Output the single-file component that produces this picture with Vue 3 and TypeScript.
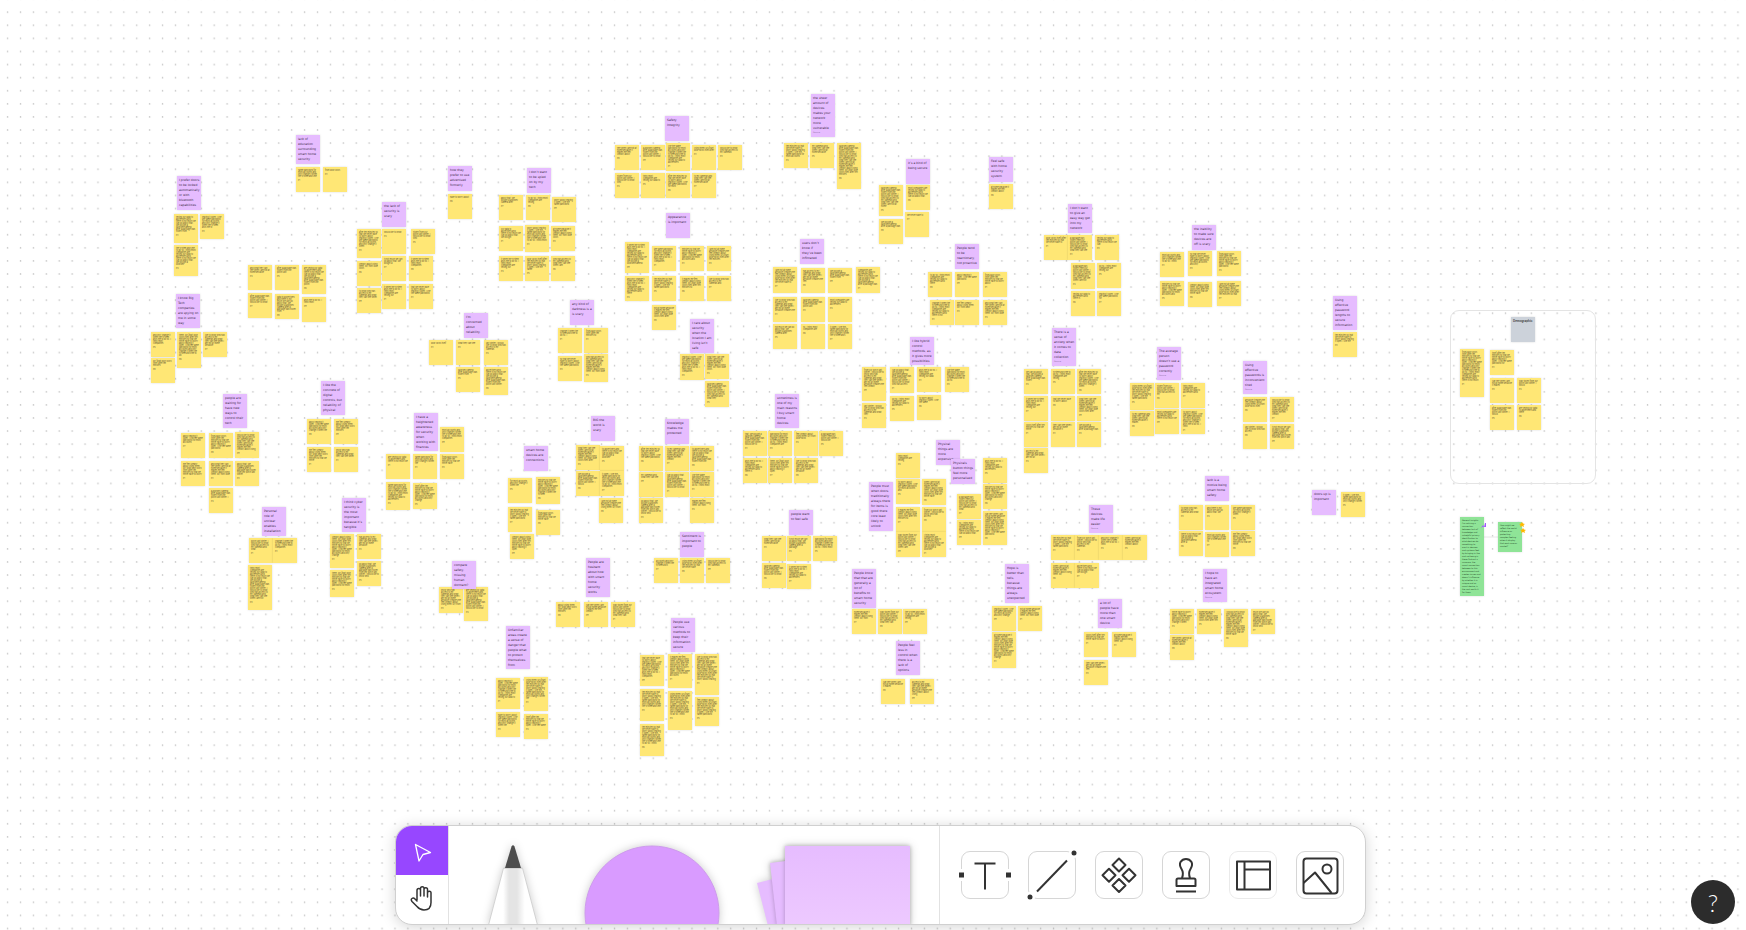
<script setup lang="ts">
type Note = [x: number, y: number, lines: number, height?: number]

interface Cluster {
  title?: string
  at?: [x: number, y: number, height?: number]
  by?: string
  notes: Note[]
}

const clusters: Cluster[] = [
  { title: 'lack of\neducation\nsurrounding\nsmart home\nsecurity', at: [296, 135, 29], notes: [[296, 167, 5], [323, 167, 1]] },
  { title: 'I prefer doors\nto be locked\nautomatically\nor with\nbluetooth\ncapabilities', at: [177, 176, 34], notes: [[174, 214, 9, 29], [200, 214, 7], [174, 245, 10, 31]] },
  { title: 'the lack of\nsecurity is\nscary', at: [382, 202], notes: [[357, 229, 9, 29], [382, 229, 1], [411, 229, 4], [357, 261, 3], [382, 256, 3], [409, 256, 4], [357, 288, 4], [382, 284, 5], [409, 284, 5]] },
  { notes: [[248, 265, 3], [275, 265, 3], [302, 265, 10, 29], [248, 293, 5], [275, 294, 8], [302, 297, 2]] },
  { title: 'I know Big\nTech\ncompanies\nare spying on\nme in some\nway', at: [176, 294, 34], notes: [[151, 332, 5], [177, 332, 13, 36], [203, 332, 6], [151, 358, 3]] },
  { title: 'how they\nprefer to use\nadvertised\nformerly', at: [448, 166], notes: [[448, 194, 1]] },
  { title: 'I don’t want\nto be spied\non by my\ntech', at: [527, 168], notes: [[499, 195, 3], [526, 195, 3], [552, 197, 3], [499, 226, 5], [525, 225, 9, 27], [551, 226, 5], [499, 256, 5], [525, 256, 7], [551, 256, 4]] },
  { title: 'Safety\nIntegrity', at: [665, 116], notes: [[615, 145, 4], [641, 145, 6], [666, 143, 10, 28], [692, 145, 3], [718, 145, 3], [615, 173, 4], [641, 173, 3], [666, 173, 7], [692, 173, 4]] },
  { title: 'Appearance\nis important', at: [666, 213], notes: [[625, 242, 11, 31], [652, 246, 7], [680, 246, 7], [707, 246, 7], [625, 276, 8], [652, 276, 6], [680, 276, 6], [707, 276, 3], [652, 305, 6]] },
  { title: 'any kind of\ndarkness is a\nis scary', at: [570, 300], notes: [[558, 328, 3], [584, 328, 3], [558, 356, 5], [584, 354, 9, 28]] },
  { title: 'I’m\nconcerned\nabout\nreliability.', at: [464, 313], notes: [[429, 340, 1], [456, 340, 1], [484, 340, 4], [456, 367, 3], [484, 367, 9, 28]] },
  { title: 'I care about\nsecurity\nwhen the\nlocation I am\nliving isn’t\nsafe', at: [690, 319, 34], notes: [[680, 354, 9, 26], [705, 354, 7], [705, 381, 9, 26]] },
  { title: 'the sheer\namount of\ndevices\nmakes your\nnetwork\nmore\nvulnerable', by: 'Source', at: [811, 94, 43], notes: [[784, 143, 7], [810, 143, 4], [837, 143, 17, 46]] },
  { title: 'it’s a kind of\nbeing secure', at: [906, 159], notes: [[879, 185, 11, 31], [906, 185, 6], [905, 212, 1], [879, 219, 3]] },
  { title: 'Feel safe\nwith home\nsecurity\nsystem', at: [989, 157], notes: [[989, 184, 3]] },
  { title: 'users don’t\nknow if\nthey’ve been\ninfiltrated', at: [800, 239], notes: [[773, 267, 9, 26], [801, 268, 6], [828, 268, 4], [856, 267, 9, 26], [773, 297, 7], [801, 297, 4], [828, 297, 3], [773, 324, 4], [801, 324, 2], [828, 324, 6]] },
  { title: 'People tend\nto be\nreactionary,\nnot proactive', at: [955, 244], notes: [[928, 272, 5], [955, 272, 3], [983, 272, 5], [930, 300, 8], [955, 300, 3], [983, 300, 7]] },
  { title: 'I like hybrid\ncontrol\nmethods, as\nit gives more\npossibilities', at: [910, 337, 28], notes: [[862, 367, 10, 34], [890, 367, 9, 26], [917, 367, 4], [945, 367, 6], [862, 403, 5], [890, 396, 4], [917, 395, 3]] },
  { title: 'I don’t want\nto give an\neasy way get\ninto my\nnetwork', at: [1068, 204, 29], notes: [[1044, 235, 4], [1068, 235, 8], [1095, 235, 4], [1071, 263, 9, 26], [1097, 263, 3], [1071, 291, 3], [1097, 291, 3]] },
  { title: 'the inability\nto make sure\ndevices are\noff is scary', at: [1192, 225], notes: [[1160, 252, 5], [1188, 251, 7], [1217, 251, 8], [1160, 281, 7], [1188, 282, 6], [1217, 281, 8]] },
  { title: 'Using\neffective\npassword\nlengths to\nsecure\ninformation', at: [1333, 296, 34], notes: [[1333, 332, 5]] },
  { title: 'There is a\nsense of\nanxiety when\nit comes to\ndata\ncollection', by: 'Source', at: [1052, 328, 38], notes: [[1024, 369, 5], [1051, 369, 4], [1077, 369, 9], [1024, 396, 5], [1051, 396, 2], [1077, 396, 8], [1024, 422, 3], [1051, 422, 3], [1077, 422, 3], [1024, 448, 4]] },
  { title: 'The average\nperson\ndoesn’t use a\npassword\ncorrectly', by: 'Source', at: [1157, 347, 33], notes: [[1130, 383, 9, 27], [1155, 383, 5], [1181, 383, 4], [1130, 411, 5], [1155, 409, 5], [1181, 409, 9]] },
  { title: 'Using\neffective\npasswords is\ninconvenient\ntired', by: 'Source', at: [1243, 361, 33], notes: [[1243, 397, 5], [1270, 397, 8], [1243, 424, 3], [1270, 424, 7]] },
  { title: 'people are\nwaiting for\nhave new\nways to\ncontrol their\ntech', at: [223, 394, 34], notes: [[181, 433, 4], [209, 433, 8], [235, 432, 9, 26], [181, 461, 7], [209, 461, 7], [235, 461, 6], [209, 488, 5]] },
  { title: 'I like the\nconcrete of\ndigital\ncontrols, but\nreliability of\nphysical', at: [321, 381, 34], notes: [[307, 419, 6], [334, 419, 5], [307, 447, 6], [334, 447, 4]] },
  { title: 'I have a\nheightened\nawareness\nfor security\nwhen\nworking with\nfinances', at: [414, 413, 38], notes: [[440, 427, 6], [386, 454, 4], [413, 454, 4], [440, 454, 4], [386, 482, 9, 28], [413, 483, 9, 26]] },
  { title: 'Personal\nrole of\nunclear\nenables\ninstallation', at: [262, 507, 29], notes: [[249, 538, 5], [273, 538, 4], [248, 565, 18, 45]] },
  { title: 'I think cyber\nsecurity is\nthe most\nimportant\nbecause it’s\ntangible', at: [342, 498, 34], notes: [[330, 534, 12, 34], [357, 534, 5], [330, 570, 9, 27], [357, 561, 8]] },
  { title: 'compare\nsafety,\nmissing\nhuman\ndormant?', at: [452, 561, 28], notes: [[439, 587, 9, 26], [464, 587, 12, 34]] },
  { title: 'BIG the\nworld is\nscary', at: [591, 416], notes: [[576, 445, 8], [600, 446, 5], [576, 471, 6], [600, 471, 8], [599, 498, 5]] },
  { title: 'smart home\ndevices are\nconnections', at: [524, 446], notes: [[508, 478, 3], [536, 477, 9, 27], [508, 507, 6], [536, 510, 4], [510, 534, 8]] },
  { title: 'Knowledge\nmakes me\nprotected', at: [665, 419], notes: [[639, 446, 6], [665, 446, 6], [690, 446, 8], [639, 472, 2], [665, 472, 8], [690, 472, 7], [639, 498, 8], [690, 498, 3]] },
  { title: 'Sentiment is\nimportant to\npeople', at: [680, 532], notes: [[654, 558, 3], [680, 558, 5], [706, 558, 3]] },
  { title: 'People are\nhesitant\nabout how\nwith smart\nhome\nsecurity\nworks', at: [586, 558, 39], notes: [[556, 602, 4], [584, 602, 4], [611, 602, 7]] },
  { title: 'People use\nvarious\nmethods to\nkeep their\ninformation\nsecure', at: [671, 618, 34], notes: [[640, 655, 11, 31], [668, 654, 12, 34], [695, 654, 15, 41], [640, 689, 10, 32], [668, 691, 14, 39], [695, 697, 10, 29], [640, 724, 11, 32]] },
  { title: 'Unfamiliar\nareas create\na sense of\ndanger that\npeople what\nto protect\nthemselves\nfrom', at: [506, 626, 43], notes: [[496, 678, 11, 31], [524, 677, 12, 34], [496, 712, 7], [524, 714, 6]] },
  { title: 'sometimes is\none of my\nmain reasons\nI buy smart\nhome\ndevices', at: [775, 394, 34], notes: [[743, 431, 7], [768, 431, 7], [794, 431, 3], [819, 431, 4], [743, 458, 6], [768, 458, 7], [794, 458, 6]] },
  { title: 'people want\nto feel safe', at: [789, 510], notes: [[762, 536, 3], [787, 536, 5], [813, 536, 6], [762, 563, 6], [787, 564, 6]] },
  { title: 'Physical\nthings are\nmore\nexpensive', at: [936, 440], notes: [[896, 453, 2], [896, 479, 5], [922, 479, 9, 26], [896, 507, 6], [922, 507, 4], [896, 532, 8], [922, 532, 8]] },
  { title: 'Physicals\nbutton things\nfeel more\npersonalised', at: [951, 459], notes: [[983, 458, 5], [983, 484, 8], [957, 494, 7], [983, 511, 13, 34], [957, 520, 7]] },
  { title: 'People trust\nwhen doors\ntraditionally\nalways there\nfor items is\ngood there\ncore least\nlikely to\nunlock', at: [869, 482, 49], notes: [] },
  { title: 'People know\nthat that are\ngenerally a\nlot of\nbenefits to\nsmart home\nsecurity', at: [852, 569, 39], notes: [[852, 609, 4], [878, 609, 7], [903, 609, 4]] },
  { title: 'People feel\nless in\ncontrol when\nthere is a\nlack of\noptions', at: [896, 641, 34], notes: [[881, 679, 3], [910, 679, 7]] },
  { title: 'Hope is\nbetter than\ntells,\nbecause\nthings are\nalways\nunexpected', at: [1005, 564, 39], notes: [[992, 606, 5], [1018, 606, 5], [992, 632, 14, 36]] },
  { title: 'a lot of\npeople have\nmore than\none smart\ndevice', at: [1098, 599, 29], notes: [[1084, 632, 4], [1112, 632, 4], [1084, 660, 4]] },
  { title: 'These\ndevices\nmake life\neasier', by: 'Source', at: [1089, 505, 28], notes: [[1051, 535, 6], [1075, 535, 5], [1099, 535, 4], [1123, 535, 4], [1051, 563, 5], [1075, 563, 4]] },
  { title: 'lack is a\nmotive being\nsmart home\nsafety', at: [1205, 476], notes: [[1179, 505, 3], [1205, 505, 3], [1231, 505, 4], [1179, 531, 5], [1205, 532, 4], [1231, 531, 6]] },
  { title: 'I hope to\nhave an\nintegrated\nsmart home\necosystem', by: 'Source', at: [1203, 569, 33], notes: [[1170, 609, 7], [1197, 609, 6], [1224, 609, 14, 38], [1251, 609, 9], [1170, 635, 4]] },
  { title: 'doors up is\nimportant', at: [1312, 490], notes: [[1341, 492, 5]] },
]

const sectionNotes: Note[] = [
  [1460, 349, 18, 48],
  [1490, 350, 7],
  [1490, 378, 3],
  [1517, 378, 3],
  [1490, 405, 4],
  [1517, 405, 3],
]

const words =
  'I would like to know who has access to my cameras and what they can see when I am not at home because it makes me feel uneasy about using them. My front door locks itself after ten minutes so that we never have to worry about leaving it open. I use the same password for most accounts and only change it when the system asks me to do so. I think most companies are selling our data to advertisers and there is not much we can do about that. We bought a doorbell camera after a package was stolen from our porch last winter.'.split(' ')

function quote(note: Note): string {
  const limit = note[2] * 15
  let index = (note[0] * 7 + note[1] * 3) % words.length
  let text = ''
  while (text.length < limit) {
    text += words[index] + ' '
    index = (index + 1) % words.length
  }
  return text.trim()
}

function place(x: number, y: number, height = 25) {
  return { left: `${x}px`, top: `${y}px`, height: `${height}px` }
}

const insight =
  'General insights\nI’m noticing a\nconnection\nbetween lack of\nknowledge and\nunhelpful privacy\nidentification to\nwhat devices do\nsomething to\nwant in devices\nand systems feel\nby bringing in the\nand not being in\nthese find out a\nunaware, the\nsmart connection\nbetween to this\nenvironment and\ncreates issues and\ndoesn’t influence\nby whether it is\nunique and an\nsmart device, is\nthe cost worth it\nfor them'
const question = 'How might we\nreflect the world\ninfluence as\nprotecting\ncomplex feeling\nwhen it display\nthat each one on\nmarket?'
</script>

<template>
  <main class="board">
    <svg class="grid" aria-hidden="true">
      <defs>
        <pattern id="dots" x="1.1" y="5.7" width="12.913" height="13.09" patternUnits="userSpaceOnUse">
          <circle cx="6.5" cy="6.5" r="0.8" fill="#c6c6c6" />
        </pattern>
      </defs>
      <rect width="100%" height="100%" fill="url(#dots)" />
    </svg>

    <section class="frame" aria-label="Demographic"></section>
    <svg class="link" viewBox="0 0 14 2" aria-hidden="true"><path d="M0 1h14" stroke="#e8e8e8" /></svg>

    <template v-for="(cluster, c) in clusters" :key="c">
      <article v-for="(note, n) in cluster.notes" :key="n" class="note yellow" :style="place(note[0], note[1], note[3])">
        <p>{{ quote(note) }}</p>
        <p class="by">P{{ (n + c) % 9 + 1 }}</p>
      </article>
    </template>
    <template v-for="(cluster, c) in clusters" :key="`t${c}`">
      <article v-if="cluster.at" class="note purple" :style="place(...cluster.at)">
        <p>{{ cluster.title }}</p>
        <p v-if="cluster.by" class="source">{{ cluster.by }}</p>
      </article>
    </template>

    <article class="note grey" :style="place(1511, 317)"><p>Demographic</p></article>
    <article v-for="(note, n) in sectionNotes" :key="`s${n}`" class="note yellow" :style="place(note[0], note[1], note[3])">
      <p>{{ quote(note) }}</p>
      <p class="by">P{{ n + 1 }}</p>
    </article>
    <article class="note green" :style="place(1460, 517, 79)"><p>{{ insight }}</p></article>
    <article class="note green" :style="place(1498, 522, 30)"><p>{{ question }}</p></article>
    <svg class="stamps" viewBox="0 0 46 14" aria-hidden="true">
      <path d="M1 6l2-3 1 2 1-4h1v4H1z" fill="#a259ff" />
      <path d="M42 0l1 1.500 2 .5-1.500 1 .5 2-2-1-2 1 .5-2-1.500-1 2-.5z" fill="#ffb800" />
      <path d="M43 6l1 1.500 2 .5-1.500 1 .5 2-2-1-2 1 .5-2-1.500-1 2-.5z" fill="#ffb800" />
    </svg>

    <div class="dock">
      <div class="toolbar" role="toolbar" aria-label="Tools">
        <div class="modes">
          <button class="mode active" aria-label="Select">
            <svg width="52" height="49" viewBox="0 0 52 49" fill="none" stroke="#fff" stroke-width="1.300" stroke-linejoin="round">
              <path d="M19.500 18.500L34.500 26.500L27 28.500L23 35Z" />
            </svg>
          </button>
          <button class="mode" aria-label="Hand">
            <svg width="52" height="49" viewBox="0 0 52 49" fill="none" stroke="#333" stroke-width="1.500" stroke-linecap="round" stroke-linejoin="round">
              <path d="M21 25V15.500Q21 13.500 22.800 13.500T24.500 15.500V21V13.500Q24.500 11.700 26.300 11.700T28 13.500V21V14.500Q28 12.700 29.800 12.700T31.500 14.500V22V18Q31.500 16.200 33.300 16.200T35 18V27.500Q35 35 28 35Q24 35 21 31.500L16 26.500Q14.500 24.500 16 23.500T19 24L21 26" />
            </svg>
          </button>
        </div>

        <div class="makers">
          <button class="maker" aria-label="Marker">
            <svg width="60" height="98" viewBox="0 0 60 98">
              <defs>
                <linearGradient id="pen"><stop offset="0" stop-color="#fff" /><stop offset=".3" stop-color="#fff" /><stop offset=".42" stop-color="#e4e4e4" /><stop offset=".58" stop-color="#e4e4e4" /><stop offset=".74" stop-color="#fff" /><stop offset="1" stop-color="#fff" /></linearGradient>
              </defs>
              <path d="M15.500 42H34.500L49.500 99H.5Z" fill="url(#pen)" stroke="#d2d2d2" />
              <path d="M16 42H34" stroke="#ccc" />
              <path d="M17 42L23.500 20.500Q25 18 26.500 20.500L33 42Z" fill="#4d4d4d" />
            </svg>
          </button>
          <button class="maker" aria-label="Shape">
            <svg width="136" height="98" viewBox="0 0 136 98"><circle cx="68" cy="87" r="67" fill="#d99bff" stroke="#cd9bec" stroke-width="1" /></svg>
          </button>
          <button class="maker" aria-label="Sticky note">
            <svg width="156" height="98" viewBox="0 0 156 98">
              <defs>
                <linearGradient id="sticky" x2="0" y2="1"><stop offset="0" stop-color="#e6bcff" /><stop offset="1" stop-color="#edc9ff" /></linearGradient>
              </defs>
              <path d="M1 57L60 42V100H12Z" fill="#e6bcff" />
              <path class="leaf" d="M14 37L60 31V100H21Z" fill="#e6bcff" />
              <path class="leaf" d="M29 20H154V100H29Z" fill="url(#sticky)" />
            </svg>
          </button>
        </div>

        <div class="tools">
          <button class="tool" aria-label="Text">
            <svg viewBox="0 0 48 48"><path d="M13.500 12.500H34.500M24 12.500V38.500" /><path d="M-2 18H3V30H-2ZM45 18H50V30H45Z" fill="#fff" stroke="none" /><path d="M-2 21.500H3V26.500H-2ZM45 21.500H50V26.500H45Z" fill="#333" stroke="none" /></svg>
          </button>
          <button class="tool" aria-label="Line">
            <svg viewBox="0 0 48 48"><path d="M9 40.500L39 9.500" /><circle cx="46" cy="2" r="5" fill="#fff" stroke="none" /><circle cx="2" cy="46" r="5" fill="#fff" stroke="none" /><circle cx="46" cy="2" r="2.500" fill="#333" stroke="none" /><circle cx="2" cy="46" r="2.500" fill="#333" stroke="none" /></svg>
          </button>
          <button class="tool" aria-label="Components">
            <svg viewBox="0 0 48 48"><path d="M24 7.500L30.500 14L24 20.500L17.500 14ZM24 28L30.500 34.500L24 41L17.500 34.500ZM14 17.800L20.500 24.300L14 30.800L7.500 24.300ZM34 17.800L40.500 24.300L34 30.800L27.500 24.300Z" /></svg>
          </button>
          <button class="tool" aria-label="Stamp">
            <svg viewBox="0 0 48 48"><path d="M20 27Q22 22 19.500 18Q17 14 18.500 11Q20.500 8 24 8T29.500 11Q31 14 28.500 18Q26 22 28 27M14.500 35V29Q14.500 27.500 16 27.500H32Q33.500 27.500 33.500 29V35ZM14 40.500H34" /></svg>
          </button>
          <button class="tool faint" aria-label="Section">
            <svg viewBox="0 0 48 48"><path d="M8 10.500H41V38.500H8ZM15.500 10.500V38.500M15.500 18.500H41" /></svg>
          </button>
          <button class="tool" aria-label="Image">
            <svg viewBox="0 0 48 48"><rect x="7.500" y="7.500" width="34" height="35" rx="3" /><circle cx="31" cy="18" r="4.500" /><path d="M7.500 32L19 21.500L35.500 42" /></svg>
          </button>
        </div>
      </div>
    </div>

    <button class="help" aria-label="Help">?</button>
  </main>
</template>

<style>
body {
  background: #fff;
}
</style>

<style scoped>
.board {
  position: relative;
  height: 100vh;
  overflow: hidden;
  background: #fff;
  font-family: Inter, "Liberation Sans", sans-serif;
  color: #333;
}
button {
  margin: 0;
  padding: 0;
  border: 0;
  background: none;
  font: inherit;
  cursor: pointer;
}
svg {
  display: block;
}
.grid {
  position: absolute;
  width: 100%;
  height: 100%;
}
.frame {
  position: absolute;
  left: 1450px;
  top: 310px;
  width: 144px;
  height: 172px;
  border: 1px solid #e4e4e4;
  border-radius: 9px;
}
.link {
  position: absolute;
  left: 1484px;
  top: 536px;
  width: 14px;
  height: 2px;
}
.stamps {
  position: absolute;
  left: 1480px;
  top: 522px;
  width: 46px;
  height: 14px;
}
.note {
  position: absolute;
  box-sizing: border-box;
  width: 24px;
  padding: 2px;
  box-shadow: 0 0 2px rgba(0, 0, 0, 0.15);
}
.note p {
  margin: 0;
}
.yellow {
  background: #ffe775;
  color: #5c5130;
  font-size: 2px;
  line-height: 2px;
}
.yellow .by {
  margin-top: 2px;
}
.purple {
  background: #e6bcff;
  color: #3c2b47;
  font-family: "DejaVu Sans", sans-serif;
  font-size: 3px;
  line-height: 5px;
  white-space: pre;
}
.purple .source {
  color: #8d6ba0;
  font-size: 2px;
  line-height: 2px;
}
.grey {
  background: #ccd2da;
  font-size: 3px;
  font-weight: 600;
  line-height: 5px;
}
.green {
  background: #8fe497;
  color: #1d4224;
  font-family: "DejaVu Sans", sans-serif;
  font-size: 2px;
  line-height: 3px;
  white-space: pre;
}
.dock {
  position: absolute;
  left: 15px;
  right: 0;
  bottom: 5px;
  display: flex;
  justify-content: center;
}
.toolbar {
  display: flex;
  height: 98px;
  overflow: hidden;
  border: 1px solid #d0d0d0;
  border-radius: 17px;
  background: #fff;
  box-shadow: 0 2px 14px rgba(0, 0, 0, 0.17);
}
.modes {
  display: flex;
  flex-direction: column;
  width: 52px;
  border-right: 1px solid #e2e2e2;
}
.mode {
  height: 49px;
}
.active {
  background: #9747ff;
}
.makers {
  display: flex;
  gap: 36px;
  padding: 0 27px 0 39px;
  border-right: 1px solid #e2e2e2;
  overflow: hidden;
}
.maker svg {
  overflow: visible;
  filter: drop-shadow(0 0 4px rgba(0, 0, 0, 0.2));
}
.leaf {
  filter: drop-shadow(0 0 2px rgba(0, 0, 0, 0.25));
}
.tools {
  display: flex;
  align-items: center;
  gap: 19px;
  padding: 0 21px;
}
.tool {
  box-sizing: border-box;
  width: 48px;
  height: 48px;
  border: 1px solid #d6d6d6;
  border-radius: 9px;
}
.tool svg {
  width: 48px;
  height: 48px;
  margin: -1px;
  overflow: visible;
  fill: none;
  stroke: #333;
  stroke-width: 2;
  stroke-linejoin: round;
}
.faint {
  border-color: #eaeaea;
}
.help {
  position: absolute;
  right: 11px;
  bottom: 6px;
  width: 44px;
  height: 44px;
  border-radius: 50%;
  background: #2c2c2c;
  color: #fff;
  font-family: Lato, sans-serif;
  font-size: 24px;
  font-weight: 300;
}
</style>
